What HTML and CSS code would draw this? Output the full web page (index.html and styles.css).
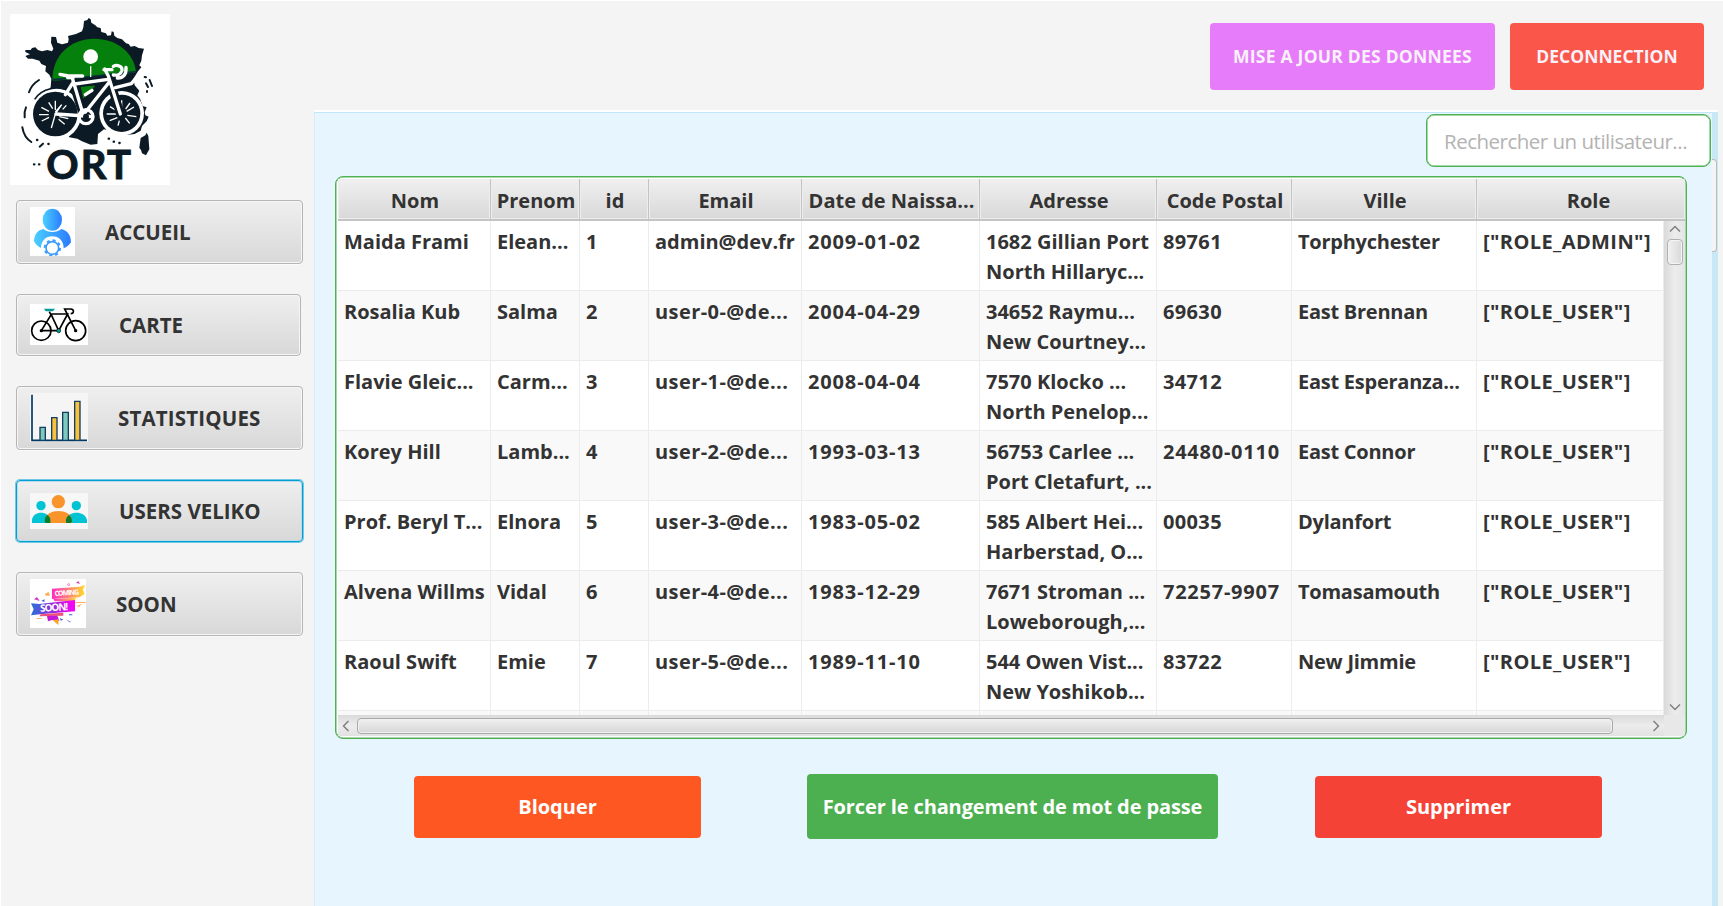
FILE: index.html
```html
<!DOCTYPE html>
<html lang="fr">
<head>
<meta charset="utf-8">
<title>ORT Veliko</title>
<link rel="stylesheet" href="styles.css">
</head>
<body>
<div class="app">
  <aside class="sidebar">
    <svg class="logo" viewBox="30 42 480 513">
      <rect x="30" y="42" width="480" height="513" fill="#fff"/>
      <path fill="#0b1a24" d="M252 63L262 60L266 54L272 58L274 68L286 76L292 82L302 84L304 96L318 100L322 107L333 106L335 94L341 96L343 107L352 114L366 118L378 130L386 132L392 140L404 138L416 144L432 146L426 166L424 182L418 196L424 202L414 214L400 236L404 256L418 272L412 286L420 296L428 318L440 322L434 336L436 346L446 350L440 364L426 378L422 392L404 402L384 404L366 398L350 404L330 392L312 388L294 402L292 432L272 434L246 424L232 416L208 412L204 404L170 410L130 400L108 376L98 346L102 316L116 292L140 274L152 262L154 236L148 224L136 214L138 198L124 192L118 182L98 176L84 176L76 168L90 163L76 156L76 150L92 150L96 144L106 142L114 150L126 154L142 150L156 154L160 146L153 128L154 110L168 111L172 128L186 133L204 128L206 118L204 108L228 102L246 94L250 82Z"/>
      <path fill="#06800d" d="M157 238C158 165 212 116 283 116C350 116 402 158 408 216L330 230L160 242Z"/>
      <path fill="#06800d" d="M241 256L286 252L268 276L250 296Z"/>
      <path fill="none" stroke="#08323c" stroke-width="5" d="M157 239L250 232L408 215"/>
      <circle cx="272" cy="170" r="22" fill="#fff"/>
      <path stroke="#fff" stroke-width="4" d="M272 199V234"/>
      <circle cx="166" cy="342" r="78" fill="#fff"/><circle cx="166" cy="342" r="67" fill="#0b1a24"/>
      <path fill="#fff" d="M404 238L440 232L440 312L426 312L400 280Z" opacity="0"/>
      <circle cx="365" cy="340" r="67" fill="#fff"/><circle cx="365" cy="340" r="56" fill="#0b1a24"/>
      <path fill="none" stroke="#0b1a24" stroke-width="5" d="M104 298C125 265 175 254 210 275"/>
      <g stroke="#fff" stroke-width="4" fill="none">
        <path d="M166 336L185 314L166 342L154 384M166 330L166 302M158 326L146 307M147 334L124 322M146 344L117 344M147 352L125 363M176 358L194 373M178 350L205 356M188 328L199 316"/>
        <path d="M365 326V301M351 333L330 320M348 342H320M352 353L329 362M358 362L354 377M376 354L389 370M382 346L409 350M380 334L402 321M377 327L390 309"/>
      </g>
      <g stroke="#0b1a24" stroke-width="26" fill="none" stroke-linejoin="round"><path d="M218 244L250 345M222 250L326 238M330 240L254 337M325 226L361 342"/></g>
      <path fill="#06800d" d="M247 262L286 258L250 292Z"/>
      <g stroke="#fff" stroke-width="10" fill="none" stroke-linejoin="round" stroke-linecap="round">
        <path d="M180 223L205 228H248M203 233L220 232M218 238L250 345M224 252L324 238M328 246L256 337M314 207L325 228L361 342M312 209H336M196 284L220 246M168 342L256 348L272 350M346 263L394 251L405 238M256 284L276 271"/>
        <path d="M340 199C350 193 368 198 366 211C363 222 352 227 340 225M378 202C380 225 368 235 352 234"/>
        <circle cx="258" cy="350" r="21"/>
      </g>
      <circle cx="258" cy="350" r="9" fill="#0b1a24"/>
      <g fill="none" stroke="#0b1a24" stroke-width="6" stroke-linecap="round">
        <path d="M117 240Q94 254 87 277M78 322Q72 335 74 352M67 382Q72 412 94 426M119 440L129 431M449 240L456 258M438 250L444 261M434 231L438 232M441 273V276"/>
        <path stroke-width="7" d="M111 420h1M145 432h1M102 493h1M117 493h1M326 416h1M341 425h1M358 429h1"/>
      </g>
      <path fill="#0b1a24" d="M440 398L445 408L448 448L438 466L426 460L423 450L418 443L422 414L436 406Z"/>
      <text class="logo-text" x="139 242 321" y="537">ORT</text>
    </svg>
    <nav class="menu">
      <button class="item item-home">
        <svg width="45" height="49" viewBox="90 51 135 147">
          <defs><linearGradient id="blue"><stop offset="0" stop-color="#4bd0ff"/><stop offset="1" stop-color="#2b7cff"/></linearGradient></defs>
          <rect x="90" y="51" width="135" height="147" fill="#fff"/>
          <g fill="url(#blue)"><ellipse cx="157" cy="89" rx="29" ry="33"/>
          <path d="M130 117C143 129 171 129 184 117C203 121 213 137 213 157C207 166 200 171 191 175C191 153 177 139 157 139C137 139 123 153 123 174C114 170 107 164 102 154C103 135 111 121 130 117Z"/></g>
          <circle cx="157" cy="174" r="19" fill="none" stroke="#3a9bff" stroke-width="5"/>
          <circle cx="157" cy="174" r="23" fill="none" stroke="#3a9bff" stroke-width="6" stroke-dasharray="9 9.06"/>
        </svg><span>ACCUEIL</span></button>
      <button class="item item-map">
        <svg width="58" height="41" viewBox="90 342 174 123">
          <rect x="90" y="342" width="174" height="123" fill="#fff"/>
          <g fill="none" stroke="#000" stroke-width="5"><circle cx="124" cy="422" r="29"/><circle cx="227" cy="422" r="30"/>
          <path d="M124 422H176L203 372H153L176 422M148 365L153 375L124 422M227 422L194 357H212C224 358 222 371 212 371"/></g>
          <path fill="#079a98" d="M132 356H165L159 364H137Z"/><circle cx="176" cy="422" r="6" fill="#079a98" stroke="#000" stroke-width="2"/><circle cx="124" cy="422" r="5"/><circle cx="227" cy="422" r="5"/>
        </svg><span>CARTE</span></button>
      <button class="item item-stats">
        <svg width="58" height="49" viewBox="90 609 174 147">
          <rect x="90" y="609" width="174" height="147" fill="#f5f5f5"/>
          <path fill="none" stroke="#003865" stroke-width="5" d="M96 614V751H261"/>
          <g stroke="#123e62" stroke-width="4"><path fill="#7dcabc" d="M120 712h16v39h-16zM188 667h17v84h-17z"/><path fill="#f8c13e" d="M155 683h16v68h-16zM224 634h16v117h-16z"/></g>
        </svg><span>STATISTIQUES</span></button>
      <button class="item item-users active">
        <svg width="58" height="36" viewBox="90 99 174 108">
          <rect x="90" y="99" width="174" height="108" fill="#f7f7f7"/>
          <g fill="#00c3d4"><circle cx="123" cy="137" r="14"/><circle cx="229" cy="137" r="14"/><path d="M96 189V180C100 151 146 151 151 180V189ZM198 189V180C204 151 255 151 261 180V189Z"/></g>
          <g fill="#f8942b"><circle cx="175" cy="125" r="20"/><path d="M135 189V180C137 144 214 144 216 180V189Z"/></g>
          <path fill="#087d2d" d="M136 189Q131 174 142 165Q154 173 151 189ZM199 189Q194 176 207 165Q220 176 214 189Z"/>
        </svg><span>USERS VELIKO</span></button>
      <button class="item item-soon">
        <svg width="56" height="49" viewBox="90 357 168 147">
          <defs><linearGradient id="warm"><stop offset="0" stop-color="#ff2bc5"/><stop offset="1" stop-color="#ffdc2b"/></linearGradient><linearGradient id="cool"><stop offset="0" stop-color="#2671d8"/><stop offset=".5" stop-color="#9b28dc"/><stop offset="1" stop-color="#ff00f7"/></linearGradient></defs>
          <rect x="90" y="357" width="168" height="147" fill="#fff"/>
          <path fill="url(#warm)" d="M156 386L239 380L255 375L249 389L254 402L238 412L156 417Z"/>
          <path fill="url(#warm)" d="M160 417L230 413L222 423L164 424Z"/>
          <path fill="url(#cool)" d="M93 430L118 432L225 420V454L120 463L93 466L101 448Z"/>
          <path fill="#ef4f7c" d="M122 463L190 458V467L118 469Z"/><path fill="#c516d8" d="M141 468L172 467L178 482L156 480L144 484Z"/><path fill="#f9a72b" d="M158 481L176 478L175 495Z"/>
          <path fill="#d93bc0" d="M102 418L111 411L119 423ZM228 369L235 363L240 371Z"/><path fill="#ffad62" d="M135 401L146 396L150 407H137ZM230 438L246 431L237 442ZM141 388L153 395ZM110 474H124V477H110ZM226 426H257V429H226Z"/>
          <path fill="#455bd6" d="M180 474L190 479L182 482ZM207 463H217V466H207ZM124 422L134 418L133 426ZM197 478L213 486L209 487Z"/><circle cx="206" cy="374" r="3" fill="none" stroke="#ef48af" stroke-width="2"/>
          <text class="soon-small" x="164" y="408" textLength="74" transform="rotate(-4 164 408)">COMING</text><text class="soon-big" x="121" y="455" textLength="84" transform="rotate(-3 121 455)">SOON!</text>
        </svg><span>SOON</span></button>
    </nav>
  </aside>
  <div class="main">
    <header class="topbar">
      <button class="btn btn-update">MISE A JOUR DES DONNEES</button>
      <button class="btn btn-logout">DECONNECTION</button>
    </header>
    <div class="viewport">
      <section class="panel">
        <input class="search" type="text" placeholder="Rechercher un utilisateur...">
        <div class="table">
          <div class="row head"><div>Nom</div><div>Prenom</div><div>id</div><div>Email</div><div>Date de Naissa...</div><div>Adresse</div><div>Code Postal</div><div>Ville</div><div>Role</div></div>
          <div class="middle">
            <div class="rows">
              <div class="row"><div>Maida Frami</div><div>Elean...</div><div>1</div><div>admin@dev.fr</div><div class="date">2009-01-02</div><div>1682 Gillian Port<br>North Hillaryc...</div><div class="zip">89761</div><div class="city">Torphychester</div><div class="role">["ROLE_ADMIN"]</div></div>
              <div class="row"><div>Rosalia Kub</div><div>Salma</div><div>2</div><div class="mail">user-0-@de...</div><div class="date">2004-04-29</div><div>34652 Raymu...<br>New Courtney...</div><div class="zip">69630</div><div class="city">East Brennan</div><div class="role">["ROLE_USER"]</div></div>
              <div class="row"><div>Flavie Gleic...</div><div>Carm...</div><div>3</div><div class="mail">user-1-@de...</div><div class="date">2008-04-04</div><div>7570 Klocko ...<br>North Penelop...</div><div class="zip">34712</div><div class="city">East Esperanza...</div><div class="role">["ROLE_USER"]</div></div>
              <div class="row"><div>Korey Hill</div><div>Lamb...</div><div>4</div><div class="mail">user-2-@de...</div><div class="date">1993-03-13</div><div>56753 Carlee ...<br>Port Cletafurt, ...</div><div class="zip zip-long">24480-0110</div><div class="city">East Connor</div><div class="role">["ROLE_USER"]</div></div>
              <div class="row"><div>Prof. Beryl T...</div><div>Elnora</div><div>5</div><div class="mail">user-3-@de...</div><div class="date">1983-05-02</div><div>585 Albert Hei...<br>Harberstad, O...</div><div class="zip">00035</div><div class="city">Dylanfort</div><div class="role">["ROLE_USER"]</div></div>
              <div class="row"><div>Alvena Willms</div><div>Vidal</div><div>6</div><div class="mail">user-4-@de...</div><div class="date">1983-12-29</div><div>7671 Stroman ...<br>Loweborough,...</div><div class="zip zip-long">72257-9907</div><div class="city">Tomasamouth</div><div class="role">["ROLE_USER"]</div></div>
              <div class="row"><div>Raoul Swift</div><div>Emie</div><div>7</div><div class="mail">user-5-@de...</div><div class="date">1989-11-10</div><div>544 Owen Vist...<br>New Yoshikob...</div><div class="zip">83722</div><div class="city">New Jimmie</div><div class="role">["ROLE_USER"]</div></div>
              <div class="row"><div></div><div></div><div></div><div></div><div></div><div></div><div></div><div></div><div></div></div>
            </div>
            <div class="vbar">
              <svg width="12" height="8" viewBox="0 0 12 8"><path d="M1 6.5L6 1.5L11 6.5"/></svg>
              <i class="vthumb"></i>
              <svg width="12" height="8" viewBox="0 0 12 8"><path d="M1 1.5L6 6.5L11 1.5"/></svg>
            </div>
          </div>
          <div class="foot">
            <div class="hbar">
              <svg width="8" height="12" viewBox="0 0 8 12"><path d="M6.500 1L1.500 6L6.500 11"/></svg>
              <i class="hthumb"></i>
              <svg width="8" height="12" viewBox="0 0 8 12"><path d="M1.500 1L6.500 6L1.500 11"/></svg>
            </div>
          </div>
        </div>
        <div class="actions">
          <button class="act act-block">Bloquer</button>
          <button class="act act-force">Forcer le changement de mot de passe</button>
          <button class="act act-delete">Supprimer</button>
        </div>
      </section>
      <div class="page-scroll"><i></i></div>
    </div>
  </div>
</div>
</body>
</html>
```

FILE: styles.css
```css
* { box-sizing: border-box; }
body { margin: 0; font-family: "Open Sans", "Noto Sans", sans-serif; font-weight: 700; font-size: 20px; color: #333; }
button, input { font: inherit; margin: 0; }
svg { display: block; flex: none; }
.app { display: flex; width: 1723px; height: 906px; overflow: hidden; background: #f4f4f4; border-top: 1px solid #fff; border-left: 1px solid #fff; }

/* Sidebar */
.sidebar { width: 313px; flex: none; padding: 13px 0 0 9px; }
.logo { width: 160px; height: 171px; overflow: visible; }
.logo-text { font: 700 120px Lato, sans-serif; fill: #0b1a24; stroke: #0b1a24; stroke-width: 3px; }
.menu { display: flex; flex-direction: column; align-items: flex-start; gap: 29px; padding: 15px 0 0 6px; }
.item { display: flex; align-items: center; width: 287px; height: 64px; padding: 0 0 1px 13px; border: 1px solid #b5b5b5; border-radius: 4px; background: linear-gradient(#efefef, #d8d8d8); box-shadow: inset 0 0 0 1px #f6f6f6, 0 1px 0 #fafafa; color: #333; font-size: 20.5px; }
.item span { line-height: 28px; white-space: nowrap; padding-top: 1px; }
.item-home span { margin-left: 30px; }
.item-map { width: 285px; height: 62px; margin-top: 1px; }
.item-map span { margin-left: 31px; }
.item-stats { margin-top: 1px; }
.item-stats span { margin-left: 30px; letter-spacing: .17px; }
.item-users { height: 62px; margin-top: 1px; }
.item-users span { margin-left: 31px; }
.item-soon { margin-top: 1px; }
.item-soon span { margin-left: 30px; }
.item.active { border-color: #039ed3; box-shadow: 0 0 0 1px #6fc8e6, inset 0 0 0 1px #b8dce8; }
.soon-small { font: 700 21px "Open Sans", sans-serif; fill: #fff; }
.soon-big { font: 700 30px "Open Sans", sans-serif; fill: #fff; }

/* Top bar */
.main { flex: 1; display: flex; flex-direction: column; }
.topbar { height: 109px; flex: none; display: flex; justify-content: flex-end; align-items: flex-start; gap: 15px; padding: 22px 19px 0 0; }
.btn { height: 67px; padding: 0 0 2px; border: 0; border-radius: 4px; color: #f9f1f9; font-size: 17.5px; white-space: nowrap; }
.btn-update { width: 285px; background: #e77cfb; letter-spacing: .23px; }
.btn-logout { width: 194px; background: #fa574a; }

/* Content */
.viewport { flex: 1; display: flex; width: 1404px; border-top: 2px solid #fff; min-height: 0; }
.panel { flex: 1; display: flex; flex-direction: column; background: #e7f5ff; border-top: 1px solid #c2e6f7; border-left: 1px solid #d3edfa; padding: 1px 0 0 20px; }
.search { align-self: flex-end; width: 285px; height: 53px; margin-right: 1px; padding: 1px 0 0 17px; border: 1.500px solid #4fb153; border-radius: 8px; background: #fff; font-weight: 400; font-size: 20.5px; letter-spacing: -.5px; outline: none; box-shadow: inset 0 0 0 .5px #4fb153; }
.search::placeholder { color: #b3b3b3; opacity: 1; }
.page-scroll { width: 6px; background: #c8e8f6; padding-top: 47px; }
.page-scroll i { display: block; height: 93px; width: 5px; background: #f4f4f4; border: 1px solid #bbb; border-left: 0; border-radius: 0 4px 4px 0; }

/* Table */
.table { width: 1352px; height: 563px; margin-top: 9px; padding: 2px 1px 2px 2px; border: 1px solid #4fb153; border-radius: 8px; background: #fff; overflow: hidden; box-shadow: inset 0 0 0 .5px #4fb153; }
.row { display: grid; grid-template-columns: 153px 89px 69px 153px 178px 177px 135px 185px 187px; height: 70px; border-bottom: 1px solid #ececec; }
.row > div { padding: 6px 0 0 6px; line-height: 30px; white-space: nowrap; overflow: hidden; border-right: 1px solid #ececec; }
.rows .row:nth-child(even) { background: #f9f9f9; }
.rows .mail { letter-spacing: .42px; }
.rows .date { letter-spacing: .85px; }
.rows .zip { letter-spacing: .35px; }
.rows .zip-long { letter-spacing: .75px; }
.rows .city { letter-spacing: -.25px; }
.rows .role { letter-spacing: .4px; }
.row.head { grid-template-columns: 153px 89px 69px 153px 178px 177px 135px 185px 1fr; height: 42px; background: linear-gradient(#f0f0f0, #d8d8d8); border-bottom: 2px solid #c4c4c4; }
.row.head > div { padding: 7px 0 0 2px; text-align: center; border-right: 1px solid #c4c4c4; box-shadow: inset 0 0 0 1px #ededed; }
.row.head > div:last-child { border-right: 0; padding-left: 15px; }
.middle { display: flex; height: 494px; }
.rows { width: 1326px; overflow: hidden; flex: none; }
.vbar { flex: 1; display: flex; flex-direction: column; align-items: center; justify-content: space-between; padding: 4px 0; background: linear-gradient(90deg, #dadada, #ececec 50%, #e5e5e5); }
.vbar path, .hbar path { fill: none; stroke: #808080; stroke-width: 1.500; }
.vthumb { width: 16px; height: 26px; margin: 6px 0 auto; border: 1px solid #b0b0b0; border-radius: 4px; background: linear-gradient(90deg, #f0f0f0, #d9d9d9); box-shadow: inset 0 0 0 1px #f5f5f5; }
.foot { height: 21px; background: #e8e8e8; }
.hbar { display: flex; align-items: center; width: 1326px; height: 21px; padding: 0 4px; background: linear-gradient(#dadada, #ececec 50%, #e2e2e2); }
.hthumb { width: 1256px; height: 16px; margin: 0 auto 0 7px; border: 1px solid #a9a9a9; border-radius: 4px; background: linear-gradient(#f0f0f0, #d6d6d6); box-shadow: inset 0 0 0 1px #f0f0f0; }

/* Actions */
.actions { display: flex; align-items: center; margin-top: 35px; padding-left: 79px; }
.act { width: 287px; height: 62px; padding: 0; border: 0; border-radius: 4px; color: #fff; white-space: nowrap; }
.act-block { background: #ff5722; }
.act-force { width: 411px; height: 65px; margin: 0 97px 0 106px; background: #4caf50; letter-spacing: -.12px; }
.act-delete { background: #f44336; }
```
